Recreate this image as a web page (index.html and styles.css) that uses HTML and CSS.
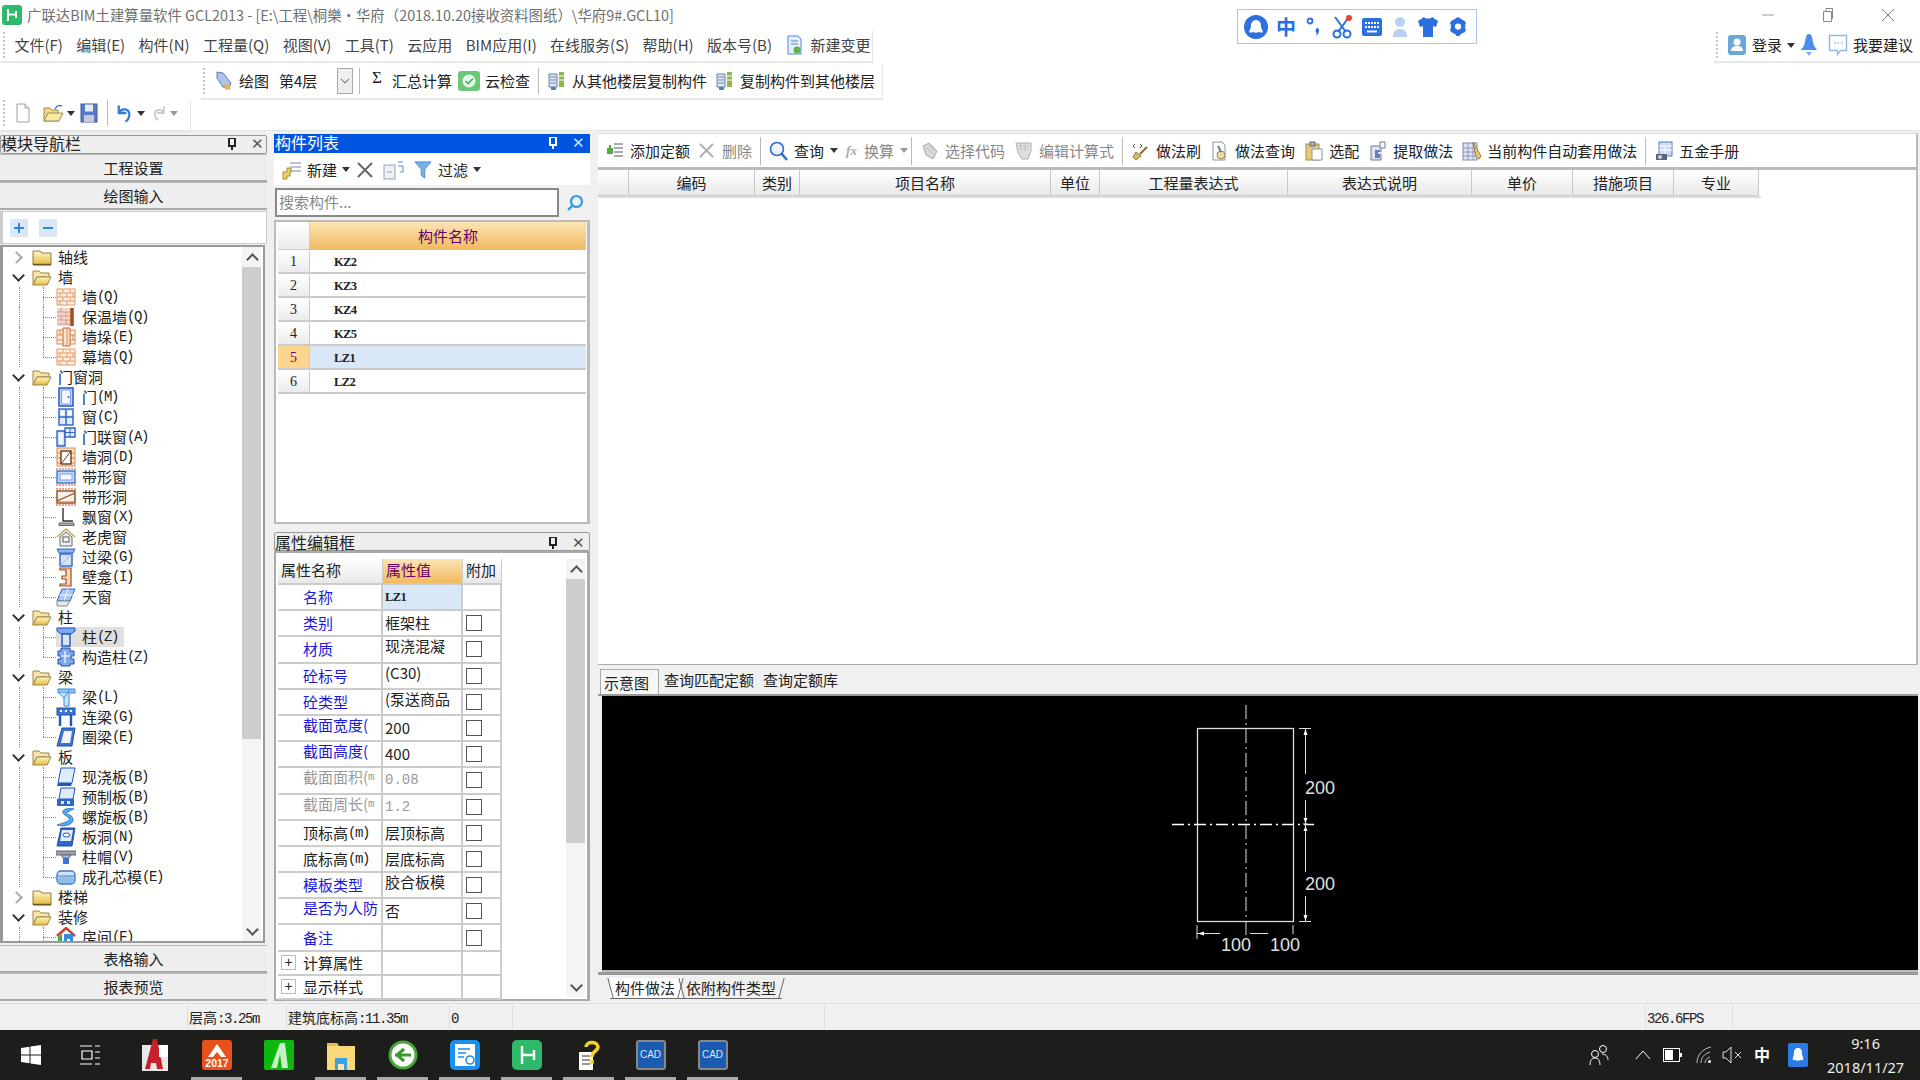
FILE: index.html
```html
<!DOCTYPE html>
<html lang="zh-CN">
<head>
<meta charset="utf-8">
<title>广联达BIM土建算量软件 GCL2013</title>
<link rel="stylesheet" href="styles.css">
</head>
<body>
<svg class="defs" width="0" height="0" aria-hidden="true">
<defs>
<linearGradient id="gy" x1="0" y1="0" x2="0" y2="1"><stop offset="0" stop-color="#fff6c8"/><stop offset="1" stop-color="#e8b93c"/></linearGradient>
<linearGradient id="gb" x1="0" y1="0" x2="0" y2="1"><stop offset="0" stop-color="#d8e6fb"/><stop offset="1" stop-color="#6f9ee8"/></linearGradient>
<symbol id="f" viewBox="0 0 20 20"><path d="M1 4h7l2 2h9v12H1z" fill="url(#gy)" stroke="#8a7a4a"/><path d="M1 17.5h18" stroke="#6a5a2a" stroke-width="1.5"/></symbol>
<symbol id="o" viewBox="0 0 20 20"><path d="M1 4h6l2 2h8v4H5L1 18z" fill="#f7e6a8" stroke="#9a8850"/><path d="M5 10h14l-4 8H1z" fill="url(#gy)" stroke="#9a8850"/></symbol>
<symbol id="wall" viewBox="0 0 20 20"><rect x="1" y="2" width="18" height="16" fill="#fdeee0" stroke="#e39a66"/><path d="M1 6h18M1 10h18M1 14h18M7 2v4M14 2v4M4 6v4M11 6v4M17 6v4M7 10v4M14 10v4M4 14v4M11 14v4" stroke="#e39a66" fill="none"/></symbol>
<symbol id="insul" viewBox="0 0 20 20"><rect x="1" y="1" width="13" height="18" fill="#f3d4cd"/><path d="M1 5h13M1 9h13M1 13h13M1 17h13M5 1v4M10 5v4M5 9v4M10 13v4" stroke="#d59a90"/><rect x="14" y="1" width="4" height="18" fill="#c0693a"/><path d="M16 1v18" stroke="#7a3a18"/></symbol>
<symbol id="pier" viewBox="0 0 20 20"><rect x="1" y="3" width="18" height="14" fill="#fdeee0" stroke="#d98a50"/><path d="M7 1h7v18H7z" fill="#fbe3cf" stroke="#c8642c"/><path d="M11 1v18M1 8h6M14 8h5M1 13h6M14 13h5M4 3v5M17 8v5" stroke="#d98a50"/></symbol>
<symbol id="door" viewBox="0 0 20 20"><rect x="3" y="1" width="14" height="18" fill="#c8dbf8" stroke="#2e62c8" stroke-width="1.6"/><rect x="5.5" y="3" width="9" height="14" fill="#f2f6fe" stroke="#7da0e0"/><circle cx="12.5" cy="10" r="1" fill="#2e62c8"/></symbol>
<symbol id="win" viewBox="0 0 20 20"><rect x="3" y="2" width="14" height="16" fill="#dfeafc" stroke="#2e62c8" stroke-width="1.4"/><path d="M10 2v16M3 10h14" stroke="#2e62c8" stroke-width="1.4"/><path d="M5 4h3v4H5zM12 4h3v4h-3z" fill="#fff"/></symbol>
<symbol id="dwin" viewBox="0 0 20 20"><path d="M1 4h8v15H1z" fill="#cfe0fa" stroke="#2e62c8" stroke-width="1.4"/><path d="M3 6h4v11H3z" fill="#f2f6fe"/><path d="M9 1h10v9H9z" fill="#e6effd" stroke="#2e62c8" stroke-width="1.4"/><path d="M14 1v9M9 5.500h10" stroke="#2e62c8"/></symbol>
<symbol id="hole" viewBox="0 0 20 20"><rect x="1" y="1" width="18" height="18" fill="#fbe3cf" stroke="#d98a50"/><path d="M1 6h4M15 6h4M1 11h4M15 11h4M1 16h4M15 16h4" stroke="#d98a50"/><rect x="5" y="4" width="10" height="13" fill="#fff" stroke="#6a3a1a" stroke-width="1.4"/><path d="M5 17 15 4" stroke="#6a3a1a"/></symbol>
<symbol id="band" viewBox="0 0 20 20"><path d="M0 2h20M0 18h20" stroke="#e8a898" stroke-width="2" stroke-dasharray="2 1"/><rect x="1" y="4" width="18" height="12" fill="#c4d8f8" stroke="#3d72d0" stroke-width="1.4"/><rect x="4" y="7" width="12" height="6" fill="#f6f9ff" stroke="#7da0e0"/></symbol>
<symbol id="bandh" viewBox="0 0 20 20"><path d="M0 2h20M0 18h20" stroke="#e8a898" stroke-width="2" stroke-dasharray="2 1"/><rect x="1" y="4" width="18" height="12" fill="#fbeee2" stroke="#8a4a20" stroke-width="1.4"/><path d="M1 14 19 6" stroke="#8a4a20" stroke-width="1.2"/><path d="M1 15h18" stroke="#c87a40"/></symbol>
<symbol id="bay" viewBox="0 0 20 20"><path d="M7 1v13h10" fill="none" stroke="#333" stroke-width="1.4"/><path d="M3 16h15v2.500H3z" fill="#aab0b8" stroke="#667"/></symbol>
<symbol id="dorm" viewBox="0 0 20 20"><path d="M1 10 10 2l9 8" fill="none" stroke="#c9a94e" stroke-width="1.6"/><path d="M4 10v9h12v-9l-6-5z" fill="#eef1f4" stroke="#667"/><rect x="7" y="10" width="6" height="5" fill="#fff" stroke="#555"/></symbol>
<symbol id="lint" viewBox="0 0 20 20"><path d="M1 2h18l-2 4H3z" fill="#8fb4ef" stroke="#2e62c8"/><rect x="4" y="7" width="12" height="12" fill="#d6e4fa" stroke="#2e62c8" stroke-width="1.4"/><path d="M4 19 16 7" stroke="#8fb4ef"/></symbol>
<symbol id="niche" viewBox="0 0 20 20"><path d="M4 1h11v18H4v-2h6v-5H6V9h4V3H4z" fill="#fbd6ba" stroke="#a04a18" stroke-width="1.2"/></symbol>
<symbol id="sky" viewBox="0 0 20 20"><path d="M6 2h13l-5 12H1z" fill="#a9c6f4" stroke="#2e62c8"/><path d="M12 2 8 14M3.500 8H17" stroke="#fff"/><path d="M1 14h13l-3 5H1z" fill="#e6e6e6" stroke="#888"/></symbol>
<symbol id="col" viewBox="0 0 20 20"><path d="M1 1h18v3l-4 3H5L1 4z" fill="#7fa8ec" stroke="#1f56c0"/><rect x="6" y="7" width="8" height="12" fill="#d6e4fa" stroke="#1f56c0" stroke-width="1.4"/></symbol>
<symbol id="gzz" viewBox="0 0 20 20"><path d="M5 1h9v3h4v5h-3v3h3v5h-4v2H5v-2H2v-5h3V9H2V4h3z" fill="#7fa8ec" stroke="#1f4fa8"/><path d="M9 4v12M5 9h9" stroke="#e6effd" stroke-width="1.5"/></symbol>
<symbol id="beam" viewBox="0 0 20 20"><path d="M2 2h17v4H2z" fill="#8fc4f4" stroke="#3a8ad8"/><path d="M3 6l5 5v8h5V6" fill="#cfe4fa" stroke="#3a8ad8"/><path d="M8 11l6-9" stroke="#3a8ad8"/></symbol>
<symbol id="lb" viewBox="0 0 20 20"><rect x="1" y="1" width="18" height="7" fill="#3f74d4" stroke="#1f4fa8"/><path d="M4 3h2v2H4zM9 3h2v2H9zM14 3h2v2h-2z" fill="#fff"/><path d="M4 8v11M15 8v11" stroke="#1f56c0" stroke-width="2.400"/></symbol>
<symbol id="ring" viewBox="0 0 20 20"><path d="M6 1h13l-3 18H1z" fill="#3f74d4" stroke="#1f4fa8"/><path d="M8 4h8l-2 12H5z" fill="#f2f6fe"/></symbol>
<symbol id="slab" viewBox="0 0 20 20"><path d="M5 1h14l-3 15H2z" fill="#e0ebfc" stroke="#1f56c0"/><path d="M2 16h14l-1 3H1z" fill="#1f56c0"/></symbol>
<symbol id="preslab" viewBox="0 0 20 20"><path d="M5 1h14l-2 11H3z" fill="#e0ebfc" stroke="#1f56c0"/><rect x="1" y="12" width="17" height="7" fill="#2f66c8"/><path d="M5 14h3v3H5zM11 14h3v3h-3z" fill="#e0ebfc"/></symbol>
<symbol id="spiral" viewBox="0 0 20 20"><path d="M18 2C8 0 4 5 9 8s6 5 1 7-7 2-9 3c6 2 17 0 16-6S7 8 12 5s4-2 6-3z" fill="#5aa8ec" stroke="#2e7ed0"/></symbol>
<symbol id="slabh" viewBox="0 0 20 20"><path d="M5 1h14l-3 18H1z" fill="#2f66c8" stroke="#1f4fa8"/><path d="M6 3h11l-2 11H4z" fill="#e0ebfc"/><ellipse cx="10.500" cy="8" rx="3.500" ry="2" fill="#fff" stroke="#1f56c0"/></symbol>
<symbol id="cap" viewBox="0 0 20 20"><rect x="0" y="4" width="20" height="4" fill="#98a0aa" stroke="#667"/><path d="M5 8h10l-2 3H7z" fill="#b4bac2" stroke="#667"/><rect x="7" y="11" width="6" height="6" fill="#3f74d4"/></symbol>
<symbol id="core" viewBox="0 0 20 20"><rect x="1" y="4" width="18" height="13" rx="4" fill="#cfe4fa" stroke="#3a7ac8" stroke-width="1.4"/><path d="M1 9h18" stroke="#3a7ac8"/><rect x="2" y="10" width="16" height="6" rx="3" fill="#8fbcea"/></symbol>
<symbol id="room" viewBox="0 0 20 20"><path d="M1 9 10 1l9 8" fill="none" stroke="#d83a2a" stroke-width="2.400"/><path d="M2 10l4-3v12H2z" fill="#3ab04a"/><path d="M8 7h9v12H8z" fill="#3a8ad8"/><rect x="11" y="12" width="3" height="7" fill="#fff"/></symbol>
<symbol id="page" viewBox="0 0 20 20"><path d="M4 1h8l4 4v14H4z" fill="#fff" stroke="#9aa2ae"/><path d="M12 1v4h4" fill="#e8ecf2" stroke="#9aa2ae"/></symbol>
<symbol id="plusdoc" viewBox="0 0 20 20"><path d="M3 1h10l3 3v15H3z" fill="#e8f0fb" stroke="#4a8ad8"/><path d="M6 6h7M6 9h7" stroke="#4a8ad8"/><circle cx="12" cy="15" r="3.500" fill="#5fb04a"/></symbol>
<symbol id="copyfl" viewBox="0 0 20 20"><path d="M2 3h8v13H2z" fill="#dfe6f2" stroke="#6a7a98"/><path d="M3 6h6M3 9h6M3 12h6" stroke="#6a8ac8"/><path d="M12 1h5v15h-5z" fill="#8ab84a"/><path d="M12 5h5M12 9h5" stroke="#fff"/><path d="M4 16h5v3H4z" fill="#3a8ac8"/></symbol>
<symbol id="pen" viewBox="0 0 20 20"><path d="M3 1l6 1 8 10-2 6-6-2L3 7z" fill="#aac4ee" stroke="#5a7ab8"/><path d="M9 14l3 5 5-1-2-6z" fill="#d8b870"/></symbol>
<symbol id="addq" viewBox="0 0 20 20"><path d="M9 3h9M9 7h9M9 11h9M9 15h9" stroke="#556" /><path d="M2 7h6v6H2z" fill="#5aa84a"/><path d="M5 4v4" stroke="#5aa84a" stroke-width="2"/></symbol>
<symbol id="sel" viewBox="0 0 20 20"><path d="M3 5 9 2l8 8-4 8-7-4z" fill="#d8d8d8" stroke="#aaa"/><path d="M6 6l6 6M9 4l6 6" stroke="#bbb"/></symbol>
<symbol id="calc" viewBox="0 0 20 20"><path d="M2 2h15v8l-3 8H8l-4-6z" fill="#e0e0e0" stroke="#b0b0b0"/><path d="M4 5h11M4 8h11M7 2v8M11 2v8" stroke="#c4c4c4"/></symbol>
<symbol id="brush" viewBox="0 0 20 20"><path d="M16 6 9 13" stroke="#8a6a3a" stroke-width="2"/><path d="M5 11l5 4-5 4-3-3z" fill="#d8c060" stroke="#8a7a3a"/><path d="M4 3 2 5l2 2M9 3l2 2-2 2" fill="none" stroke="#555"/></symbol>
<symbol id="qry" viewBox="0 0 20 20"><path d="M3 1h9l3 3v15H3z" fill="#fff" stroke="#8a96aa"/><circle cx="11" cy="14" r="4" fill="#e8d8a8" stroke="#a08a50"/><path d="M8 5l3 6" stroke="#6a7a98" stroke-width="2"/></symbol>
<symbol id="clip" viewBox="0 0 20 20"><rect x="2" y="3" width="13" height="16" fill="#e8c878" stroke="#a08a50"/><rect x="6" y="1" width="5" height="4" fill="#aab2be" stroke="#667"/><path d="M8 8h10v11H8z" fill="#fff" stroke="#8a96aa"/></symbol>
<symbol id="ext" viewBox="0 0 20 20"><path d="M3 5h10v14H3z" fill="#dfe6f2" stroke="#6a7a98"/><path d="M7 9h5v8H7z" fill="#6a7ac8"/><path d="M12 1h5v6h-5z" fill="#fff" stroke="#6a7a98"/><path d="M10 12h5" stroke="#fff" stroke-width="1.6"/></symbol>
<symbol id="auto" viewBox="0 0 20 20"><rect x="1" y="2" width="14" height="17" fill="#dfe6f2" stroke="#7a8ab0"/><path d="M1 7h14M1 11h14M1 15h14M6 2v17M11 2v17" stroke="#8a9ac0"/><path d="M11 1l8 14-2 3-3-2z" fill="#e8c878" stroke="#a07a30"/></symbol>
<symbol id="hw" viewBox="0 0 20 20"><rect x="5" y="1" width="13" height="14" fill="#cddcf4" stroke="#5a7ab8"/><path d="M5 5h13M5 9h13M11 5v10" stroke="#fff"/><path d="M2 13h11v6H2z" fill="#5a6478"/><circle cx="6" cy="16" r="2" fill="#d0d4da"/></symbol>
</defs>
</svg>

<div class="topbar">
  <header class="titlebar">
    <svg class="logo" viewBox="0 0 20 20"><rect width="20" height="20" rx="3" fill="#2fb96a"/><path d="M6 4v12M6 9.500h9M14 6v7" stroke="#fff" stroke-width="2" fill="none"/></svg>
    <span class="title">广联达BIM土建算量软件 GCL2013 - [E:\工程\桐樂·华府（2018.10.20接收资料图纸）\华府9#.GCL10]</span>
    <div class="winctl">
      <svg viewBox="0 0 14 14"><path d="M1 7h12" stroke="#999"/></svg>
      <svg viewBox="0 0 14 14"><path d="M2.500 3.500h8v10h-8zM5 3.500V.5h6.500v10h-1" fill="none" stroke="#888"/></svg>
      <svg viewBox="0 0 14 14"><path d="M1 1l12 12M13 1 1 13" stroke="#777" fill="none"/></svg>
    </div>
  </header>

  <div class="ime">
    <svg class="ime-a" viewBox="0 0 24 24"><circle cx="12" cy="12" r="12" fill="#2b6fe0"/><path d="M12 5c3 0 5 2.500 5 5.500 0 3 1.500 5 2 6.500-1.500 1-3 .5-4 0-2 1-4 1-6 0-1 .5-2.500 1-4 0 .5-1.500 2-3.500 2-6.500C7 7.500 9 5 12 5z" fill="#fff"/></svg>
    <span class="ime-zh">中</span>
    <svg class="ime-p" viewBox="0 0 16 20"><circle cx="4" cy="4" r="2.500" fill="none" stroke="#2b6fe0" stroke-width="1.800"/><path d="M12 11c2 2 1 6-2 8 1-2 1-3 0-4a2.500 2.500 0 0 1 2-4z" fill="#2b6fe0"/></svg>
    <svg class="ime-s" viewBox="0 0 20 24"><path d="M3 2l11 15M17 2 6 17" stroke="#2b6fe0" stroke-width="2"/><circle cx="5" cy="19" r="3.500" fill="none" stroke="#2b6fe0" stroke-width="2"/><circle cx="15" cy="19" r="3.500" fill="none" stroke="#2b6fe0" stroke-width="2"/><circle cx="17" cy="3" r="3" fill="#f04030"/></svg>
    <svg class="ime-k" viewBox="0 0 20 18"><rect width="20" height="18" rx="2" fill="#2b6fe0"/><path d="M3 5h14M3 9h14" stroke="#fff" stroke-width="2" stroke-dasharray="2 1"/><path d="M5 13.500h10" stroke="#fff" stroke-width="2"/></svg>
    <svg class="ime-u" viewBox="0 0 16 22"><circle cx="8" cy="6" r="5" fill="#b8d0f4"/><path d="M1 21c0-6 3-8 7-8s7 2 7 8z" fill="#b8d0f4"/></svg>
    <svg class="ime-t" viewBox="0 0 20 22"><path d="M6 1 0 5l2 6 3-1v11h10V10l3 1 2-6-6-4c-1 2-7 2-8 0z" fill="#2b6fe0"/></svg>
    <svg class="ime-g" viewBox="0 0 20 22"><path d="M10 0l8 5v11l-8 5-8-5V5z" fill="#2b6fe0"/><path d="M10 1v20M2 5.500l16 10M18 5.500 2 15.500" stroke="#2b6fe0" stroke-width="4"/><circle cx="10" cy="10.500" r="3.500" fill="#fff"/></svg>
  </div>

  <div class="menurow">
    <nav class="strip menu">
      <span class="grip"></span>
      <span>文件(F)</span><span>编辑(E)</span><span>构件(N)</span><span>工程量(Q)</span><span>视图(V)</span><span>工具(T)</span><span>云应用</span><span>BIM应用(I)</span><span>在线服务(S)</span><span>帮助(H)</span><span>版本号(B)</span>
      <span class="ti"><svg class="ic"><use href="#plusdoc"/></svg>新建变更</span>
    </nav>
    <div class="strip login">
      <span class="grip"></span>
      <svg class="ic" viewBox="0 0 20 20"><rect x="1" width="18" height="20" rx="3" fill="#6aa8d8"/><circle cx="10" cy="7" r="3.500" fill="#fff"/><path d="M4 16c0-4 3-5 6-5s6 1 6 5z" fill="#fff"/></svg>
      <span>登录</span><span class="caret"></span>
      <svg class="bell" viewBox="0 0 16 22"><path d="M8 0c3 0 3 3 4 8s3 6 4 8H0c1-2 3-3 4-8s1-8 4-8z" fill="#4a90e8"/><path d="M5 18h6l-3 4z" fill="#7ab0ec"/></svg>
      <svg class="msg" viewBox="0 0 20 22"><path d="M1.500 1.500h17v15h-6l-3 4v-4h-8z" fill="#fff" stroke="#8ab8ec" stroke-width="1.400"/><path d="M6 9h1.500M9.500 9H11M13 9h1.500" stroke="#5a8ac8"/></svg>
      <span>我要建议</span>
    </div>
  </div>

  <div class="strip tb2">
    <span class="grip"></span>
    <svg class="ic"><use href="#pen"/></svg><span class="lb">绘图</span>
    <span class="combo"><span class="combo-t">第4层</span><span class="combo-b"><svg viewBox="0 0 10 6"><path d="M1 1l4 4 4-4" fill="none" stroke="#555"/></svg></span></span>
    <span class="vsep"></span>
    <span class="sigma">Σ</span><span class="lb sum">汇总计算</span>
    <svg class="ic chk" viewBox="0 0 22 20"><rect width="22" height="20" rx="3" fill="#6cc878"/><circle cx="11" cy="10" r="6.500" fill="#e6f8e8"/><path d="M7.500 10l2.500 2.500 5-5" fill="none" stroke="#4ab060" stroke-width="1.600"/></svg><span class="lb">云检查</span>
    <span class="vsep wide"></span>
    <svg class="ic"><use href="#copyfl"/></svg><span class="lb">从其他楼层复制构件</span>
    <svg class="ic cf2"><use href="#copyfl"/></svg><span class="lb">复制构件到其他楼层</span>
  </div>

  <div class="strip tb3">
    <span class="grip"></span>
    <svg class="ic16"><use href="#page"/></svg>
    <svg class="ic open" viewBox="0 0 22 20"><path d="M2 5h6l2 2h6v11H2z" fill="#f0d88a" stroke="#a08a50"/><path d="M6 10h15l-4 8H2z" fill="#f8e8a8" stroke="#a08a50"/><path d="M13 6c2-4 5-4 7-3" fill="none" stroke="#3a7ad8" stroke-width="1.500"/></svg>
    <span class="caret"></span>
    <svg class="ic save" viewBox="0 0 18 20"><rect x="1" y="1" width="16" height="18" fill="#5a7ac8" stroke="#3a5aa0"/><rect x="5" y="1.500" width="8" height="7" fill="#e8eef8"/><rect x="4" y="12" width="10" height="7" fill="#c8c8d8"/></svg>
    <span class="vsep"></span>
    <svg class="ic undo" viewBox="0 0 20 20"><path d="M4 2v8h8" fill="none" stroke="#3a7ad8" stroke-width="2.400"/><path d="M4 10c3-6 12-5 11 3-.5 3-2 5-4 6" fill="none" stroke="#3a7ad8" stroke-width="2.400"/></svg>
    <span class="caret"></span>
    <svg class="ic redo" viewBox="0 0 20 20"><path d="M16 2v8H8" fill="none" stroke="#c4ccd4" stroke-width="2.400"/><path d="M16 10C13 4 4 5 5 13c.5 3 2 5 4 6" fill="none" stroke="#c4ccd4" stroke-width="2.400"/></svg>
    <span class="caret dim"></span>
  </div>
</div>

<main class="main">
  <section class="col-left">
    <div class="ptitle"><span>模块导航栏</span><span class="pctl"><b class="pin"></b><b class="cls">✕</b></span></div>
    <button class="navbtn">工程设置</button>
    <button class="navbtn">绘图输入</button>
    <div class="pm">
      <svg viewBox="0 0 18 18"><rect width="18" height="18" fill="#dbe6f6"/><path d="M9 4v10M4 9h10" stroke="#2a8ae0" stroke-width="2"/></svg>
      <svg viewBox="0 0 18 18"><rect width="18" height="18" fill="#dbe6f6"/><path d="M4 9h10" stroke="#2a8ae0" stroke-width="2"/></svg>
    </div>
    <div class="treebox">
      <div class="tree">
        <div class="g"><i class="chev c"></i><svg class="fi"><use href="#f"/></svg>轴线</div>
        <div class="g"><i class="chev"></i><svg class="fi"><use href="#o"/></svg>墙</div>
        <div class="l"><i class="dots"></i><svg class="ti20"><use href="#wall"/></svg>墙<em>(Q)</em></div>
        <div class="l"><i class="dots"></i><svg class="ti20"><use href="#insul"/></svg>保温墙<em>(Q)</em></div>
        <div class="l"><i class="dots"></i><svg class="ti20"><use href="#pier"/></svg>墙垛<em>(E)</em></div>
        <div class="l e"><i class="dots"></i><svg class="ti20"><use href="#wall"/></svg>幕墙<em>(Q)</em></div>
        <div class="g"><i class="chev"></i><svg class="fi"><use href="#o"/></svg>门窗洞</div>
        <div class="l"><i class="dots"></i><svg class="ti20"><use href="#door"/></svg>门<em>(M)</em></div>
        <div class="l"><i class="dots"></i><svg class="ti20"><use href="#win"/></svg>窗<em>(C)</em></div>
        <div class="l"><i class="dots"></i><svg class="ti20"><use href="#dwin"/></svg>门联窗<em>(A)</em></div>
        <div class="l"><i class="dots"></i><svg class="ti20"><use href="#hole"/></svg>墙洞<em>(D)</em></div>
        <div class="l"><i class="dots"></i><svg class="ti20"><use href="#band"/></svg>带形窗</div>
        <div class="l"><i class="dots"></i><svg class="ti20"><use href="#bandh"/></svg>带形洞</div>
        <div class="l"><i class="dots"></i><svg class="ti20"><use href="#bay"/></svg>飘窗<em>(X)</em></div>
        <div class="l"><i class="dots"></i><svg class="ti20"><use href="#dorm"/></svg>老虎窗</div>
        <div class="l"><i class="dots"></i><svg class="ti20"><use href="#lint"/></svg>过梁<em>(G)</em></div>
        <div class="l"><i class="dots"></i><svg class="ti20"><use href="#niche"/></svg>壁龛<em>(I)</em></div>
        <div class="l e"><i class="dots"></i><svg class="ti20"><use href="#sky"/></svg>天窗</div>
        <div class="g"><i class="chev"></i><svg class="fi"><use href="#o"/></svg>柱</div>
        <div class="l sel"><i class="dots"></i><span class="seltxt"><svg class="ti20"><use href="#col"/></svg>柱<em>(Z)</em></span></div>
        <div class="l e"><i class="dots"></i><svg class="ti20"><use href="#gzz"/></svg>构造柱<em>(Z)</em></div>
        <div class="g"><i class="chev"></i><svg class="fi"><use href="#o"/></svg>梁</div>
        <div class="l"><i class="dots"></i><svg class="ti20"><use href="#beam"/></svg>梁<em>(L)</em></div>
        <div class="l"><i class="dots"></i><svg class="ti20"><use href="#lb"/></svg>连梁<em>(G)</em></div>
        <div class="l e"><i class="dots"></i><svg class="ti20"><use href="#ring"/></svg>圈梁<em>(E)</em></div>
        <div class="g"><i class="chev"></i><svg class="fi"><use href="#o"/></svg>板</div>
        <div class="l"><i class="dots"></i><svg class="ti20"><use href="#slab"/></svg>现浇板<em>(B)</em></div>
        <div class="l"><i class="dots"></i><svg class="ti20"><use href="#preslab"/></svg>预制板<em>(B)</em></div>
        <div class="l"><i class="dots"></i><svg class="ti20"><use href="#spiral"/></svg>螺旋板<em>(B)</em></div>
        <div class="l"><i class="dots"></i><svg class="ti20"><use href="#slabh"/></svg>板洞<em>(N)</em></div>
        <div class="l"><i class="dots"></i><svg class="ti20"><use href="#cap"/></svg>柱帽<em>(V)</em></div>
        <div class="l e"><i class="dots"></i><svg class="ti20"><use href="#core"/></svg>成孔芯模<em>(E)</em></div>
        <div class="g"><i class="chev c"></i><svg class="fi"><use href="#f"/></svg>楼梯</div>
        <div class="g"><i class="chev"></i><svg class="fi"><use href="#o"/></svg>装修</div>
        <div class="l"><i class="dots"></i><svg class="ti20"><use href="#room"/></svg>房间<em>(F)</em></div>
      </div>
      <div class="vbar tree-bar"><span class="up-a"></span><span class="thumb"></span><span class="dn-a"></span></div>
    </div>
    <button class="navbtn first">表格输入</button>
    <button class="navbtn">报表预览</button>
  </section>

  <section class="col-mid">
    <div class="ptitle active"><span>构件列表</span><span class="pctl"><b class="pin w"></b><b class="cls">✕</b></span></div>
    <div class="midtools">
      <svg class="ic new" viewBox="0 0 20 20"><path d="M8 3h11M8 7h11M8 11h11" stroke="#7a8aa0"/><path d="M1 12h4V8h4v4h-1v4H5v3H1z" fill="#f0d060" stroke="#a88a30"/></svg><span>新建</span><span class="caret"></span>
      <svg class="x" viewBox="0 0 16 16"><path d="M1 1l14 14M15 1 1 15" stroke="#666" stroke-width="2"/></svg>
      <svg class="ic cp" viewBox="0 0 22 20"><rect x="1" y="5" width="11" height="14" fill="#eef1f6" stroke="#9aa2ae"/><path d="M4 12h5" stroke="#9aa2ae"/><path d="M15 2h5M15 6h5v6h-3" fill="none" stroke="#5a8ac8"/></svg>
      <svg class="ic fn" viewBox="0 0 20 20"><path d="M1 1h18l-7 8v10l-4-3V9z" fill="#7ab0e4" stroke="#4a8ac8"/></svg><span>过滤</span><span class="caret"></span>
    </div>
    <div class="searchrow">
      <span class="search">搜索构件...</span>
      <span class="searchbtn"><svg viewBox="0 0 18 18"><circle cx="10.500" cy="7.500" r="5.500" fill="#e8f4fc" stroke="#3a9ae0" stroke-width="2.200"/><path d="M6.500 11.500 2 16" stroke="#3a9ae0" stroke-width="2.400"/></svg></span>
    </div>
    <div class="listgrid">
      <div class="lhead-n"></div><div class="lhead">构件名称</div>
      <div class="ln">1</div><div class="lv">KZ2</div>
      <div class="ln">2</div><div class="lv">KZ3</div>
      <div class="ln">3</div><div class="lv">KZ4</div>
      <div class="ln">4</div><div class="lv">KZ5</div>
      <div class="ln on">5</div><div class="lv on">LZ1</div>
      <div class="ln">6</div><div class="lv">LZ2</div>
    </div>
    <div class="ptitle prop"><span>属性编辑框</span><span class="pctl"><b class="pin"></b><b class="cls">✕</b></span></div>
    <div class="propbox">
      <div class="pgrid">
        <div class="ph">属性名称</div><div class="ph val">属性值</div><div class="ph">附加</div>
        <div class="pn bl">名称</div><div class="pv sel-v mono">LZ1</div><div class="pc"></div>
        <div class="pn bl">类别</div><div class="pv">框架柱</div><div class="pc"><i class="cb"></i></div>
        <div class="pn bl">材质</div><div class="pv up">现浇混凝</div><div class="pc"><i class="cb"></i></div>
        <div class="pn bl">砼标号</div><div class="pv up">(C30)</div><div class="pc"><i class="cb"></i></div>
        <div class="pn bl">砼类型</div><div class="pv up">(泵送商品</div><div class="pc"><i class="cb"></i></div>
        <div class="pn bl up">截面宽度(</div><div class="pv">200</div><div class="pc"><i class="cb"></i></div>
        <div class="pn bl up">截面高度(</div><div class="pv">400</div><div class="pc"><i class="cb"></i></div>
        <div class="pn gr up">截面面积(<small>m</small></div><div class="pv gr mono">0.08</div><div class="pc"><i class="cb"></i></div>
        <div class="pn gr up">截面周长(<small>m</small></div><div class="pv gr mono">1.2</div><div class="pc"><i class="cb"></i></div>
        <div class="pn">顶标高<em>(m)</em></div><div class="pv">层顶标高</div><div class="pc"><i class="cb"></i></div>
        <div class="pn">底标高<em>(m)</em></div><div class="pv">层底标高</div><div class="pc"><i class="cb"></i></div>
        <div class="pn bl">模板类型</div><div class="pv up">胶合板模</div><div class="pc"><i class="cb"></i></div>
        <div class="pn bl up">是否为人防</div><div class="pv">否</div><div class="pc"><i class="cb"></i></div>
        <div class="pn bl">备注</div><div class="pv"></div><div class="pc"><i class="cb"></i></div>
        <div class="pn exp"><i class="plus">+</i>计算属性</div><div class="pv"></div><div class="pc"></div>
        <div class="pn exp"><i class="plus">+</i>显示样式</div><div class="pv"></div><div class="pc"></div>
      </div>
      <div class="vbar prop-bar"><span class="up-a"></span><span class="thumb"></span><span class="dn-a"></span></div>
    </div>
  </section>

  <section class="col-right">
    <div class="rtools">
      <span class="ti"><svg class="ic"><use href="#addq"/></svg>添加定额</span>
      <span class="ti dis"><svg class="x" viewBox="0 0 16 16"><path d="M1 1l14 14M15 1 1 15" stroke="#aaa" stroke-width="2"/></svg>删除</span>
      <span class="vsep"></span>
      <span class="ti"><svg class="ic" viewBox="0 0 20 20"><circle cx="8" cy="8" r="6.500" fill="#eef4fc" stroke="#2a6ad0" stroke-width="1.600"/><path d="M12.500 12.500 18 19" stroke="#2a6ad0" stroke-width="2.400"/></svg>查询<span class="caret"></span></span>
      <span class="ti dis"><span class="fx">fx</span>换算<span class="caret dim"></span></span>
      <span class="vsep a"></span>
      <span class="ti dis"><svg class="ic"><use href="#sel"/></svg>选择代码</span>
      <span class="ti dis"><svg class="ic"><use href="#calc"/></svg>编辑计算式</span>
      <span class="vsep"></span>
      <span class="ti"><svg class="ic"><use href="#brush"/></svg>做法刷</span>
      <span class="ti"><svg class="ic"><use href="#qry"/></svg>做法查询</span>
      <span class="ti"><svg class="ic"><use href="#clip"/></svg>选配</span>
      <span class="ti"><svg class="ic"><use href="#ext"/></svg>提取做法</span>
      <span class="ti"><svg class="ic"><use href="#auto"/></svg>当前构件自动套用做法</span>
      <span class="vsep"></span>
      <span class="ti"><svg class="ic"><use href="#hw"/></svg>五金手册</span>
    </div>
    <div class="qtable">
      <div class="qhead">
        <span class="q0"></span><span class="q1">编码</span><span class="q2">类别</span><span class="q3">项目名称</span><span class="q4">单位</span><span class="q5">工程量表达式</span><span class="q6">表达式说明</span><span class="q7">单价</span><span class="q8">措施项目</span><span class="q9">专业</span>
      </div>
    </div>
    <div class="dtabs"><span class="dtab on">示意图</span><span class="dtab">查询匹配定额</span><span class="dtab">查询定额库</span></div>
    <div class="canvas">
      <svg class="draw">
        <g fill="none" stroke="#ddd">
          <rect x="595.500" y="32.500" width="96" height="193" stroke-width="1.300"/>
          <path d="M644 9v230" stroke-dasharray="14 4 2 4"/>
          <path d="M570 128.500h142" stroke="#fff" stroke-dasharray="12 4 2 4" stroke-width="1.300"/>
          <path d="M697 32.500h12M697 225.500h12M703.500 32v46M703.500 104v72M703.500 200v26M701 128h5"/>
          <path d="M595 229v14M691 229v9M595 237.500h23M648 237.500h18"/>
        </g>
        <g fill="#fff"><path d="M703.500 33l2 6h-4zM703.500 225l2-6h-4zM703.500 127l2-5h-4zM703.500 130l2 5h-4zM596 237.500l6-2v4z"/></g>
        <text x="703" y="98" class="dim">200</text>
        <text x="703" y="194" class="dim">200</text>
        <text x="619" y="255" class="dim">100</text>
        <text x="668" y="255" class="dim">100</text>
      </svg>
    </div>
    <div class="btabs"><span class="btab on">构件做法</span><span class="btab">依附构件类型</span></div>
  </section>
</main>

<footer class="status">
  <span class="s0"></span><span class="s1">层高<em>:3.25m</em></span><span class="s2">建筑底标高<em>:11.35m</em></span><span class="s3"><em>0</em></span><span class="s4"></span><span class="s5"></span><span class="s6"><em>326.6FPS</em></span><span class="s7"></span>
</footer>

<div class="taskbar">
  <div class="slots">
    <span class="slot"><svg class="tw" viewBox="0 0 20 20"><path d="M0 3l8.500-1.200V9.500H0zM9.500 1.600 20 0v9.500H9.500zM0 10.500h8.500v7.700L0 17zM9.500 10.500H20V20L9.500 18.400z" fill="#fff"/></svg></span>
    <span class="slot"><svg class="tw tv" viewBox="0 0 20 20"><path d="M0 1h12M0 19h12M2 6h10v8H2zM15 1h5M15 7h5M15 13h5M15 19h5" fill="none" stroke="#fff" stroke-width="1.200"/></svg></span>
    <span class="slot"><svg class="app1" viewBox="0 0 26 32"><path d="M0 6h26v26H0z" fill="#e8e8e8"/><path d="M3 30 11 0h4l6 30h-6l-1-6H9l-1 6z" fill="#c8202a"/><rect x="17" y="6" width="9" height="12" fill="#fff"/></svg></span>
    <span class="slot run"><svg class="app" viewBox="0 0 30 30"><rect width="30" height="30" rx="3" fill="#e8501c"/><path d="M6 17 15 4l9 13h-5l-4-5-4 5z" fill="#fff"/><text x="15" y="27" class="y17">2017</text></svg></span>
    <span class="slot"><svg class="app" viewBox="0 0 30 30"><rect width="30" height="30" rx="2" fill="#0cb80c"/><path d="M7 28 16 3h5l3 25h-6l-2-14-3 14z" fill="#c8f0c8"/></svg></span>
    <span class="slot run"><svg class="app" viewBox="0 0 30 30"><path d="M1 3h10l2 3h16v24H1z" fill="#f8d878"/><path d="M1 3h10l2 3H1z" fill="#e8b848"/><rect x="9" y="18" width="12" height="12" fill="#3aa0e8"/><rect x="12" y="24" width="6" height="6" fill="#f8e8a8"/></svg></span>
    <span class="slot run"><svg class="app" viewBox="0 0 30 30"><circle cx="15" cy="15" r="13" fill="#fff" stroke="#4aa83a" stroke-width="3"/><path d="M7 15h16M9 15l7-6M9 15l7 6" stroke="#3a9a2a" stroke-width="3" fill="none"/></svg></span>
    <span class="slot run"><svg class="app" viewBox="0 0 30 30"><rect width="30" height="30" rx="5" fill="#1a90f0"/><rect x="5" y="4" width="20" height="22" fill="#fff"/><path d="M8 9h12M8 13h8M8 17h6" stroke="#1a90f0" stroke-width="1.600"/><circle cx="20" cy="20" r="4" fill="none" stroke="#1a90f0" stroke-width="1.600"/></svg></span>
    <span class="slot run"><svg class="app" viewBox="0 0 30 30"><rect width="30" height="30" rx="5" fill="#2fb96a"/><path d="M10 6v18M10 15h13M22 10v10" stroke="#fff" stroke-width="2.400" fill="none"/></svg></span>
    <span class="slot run"><svg class="app" viewBox="0 0 30 30"><path d="M5 12h14v18H5z" fill="#fff"/><path d="M8 16h8M8 20h8M8 24h8" stroke="#333"/><path d="M12 7c0-6 12-6 12 0 0 4-6 4-6 10M18 20v4" fill="none" stroke="#f8d020" stroke-width="3.600"/></svg></span>
    <span class="slot run"><span class="cad">CAD</span></span>
    <span class="slot run"><span class="cad">CAD</span></span>
  </div>
  <div class="tray">
    <svg class="tp" viewBox="0 0 20 22"><circle cx="6" cy="10" r="3.500" fill="none" stroke="#fff"/><circle cx="14" cy="5" r="3.500" fill="none" stroke="#fff"/><path d="M1 21c0-5 2-7 5-7s5 2 5 7M13 10c3 0 6 2 6 6" fill="none" stroke="#fff"/></svg>
    <svg class="tc" viewBox="0 0 16 10"><path d="M1 9l7-8 7 8" fill="none" stroke="#fff"/></svg>
    <svg class="tb" viewBox="0 0 20 16"><rect x=".5" y="1.500" width="16" height="13" fill="none" stroke="#fff"/><rect x="2" y="3" width="8" height="10" fill="#fff"/><path d="M18 6v4" stroke="#fff" stroke-width="2"/></svg>
    <svg class="tf" viewBox="0 0 16 18"><path d="M1 17C1 9 6 3 15 1M5 17c0-5 3-9 9-11M9 17c0-3 2-5 5-6" fill="none" stroke="#bbb"/><circle cx="13.500" cy="15.500" r="1.500" fill="#fff"/></svg>
    <svg class="ts" viewBox="0 0 20 18"><path d="M1 6h3l5-5v16l-5-5H1z" fill="none" stroke="#ddd"/><path d="M13 6l6 6M19 6l-6 6" stroke="#ddd"/></svg>
    <span class="tz">中</span>
    <svg class="tq" viewBox="0 0 20 24"><rect width="20" height="24" rx="2" fill="#2b7ae8"/><path d="M10 5c3 0 4 2 4 5s2 6 1 7c-1 .5-2 0-2 0-2 1-4 1-6 0 0 0-1 .5-2 0-1-1 1-4 1-7s1-5 4-5z" fill="#fff"/></svg>
    <span class="clock"><span>9:16</span><span>2018/11/27</span></span>
  </div>
</div>
</body>
</html>
```
FILE: styles.css
```css
* { box-sizing: border-box; }
html, body { margin: 0; height: 100%; }
body {
  width: 1920px; height: 1080px; overflow: hidden;
  display: flex; flex-direction: column;
  background: #f0f0f0; color: #222;
  font: 15px/1.2 "Noto Sans CJK SC", "Noto Sans", sans-serif;
}
em { font: normal 14px "Liberation Mono", monospace; letter-spacing: -1.4px; color: inherit; }
.defs { display: block; width: 0; height: 0; flex: none; }

/* top area */
.topbar { height: 130px; flex: none; background: #fff; display: flex; flex-direction: column; position: relative; }
.titlebar { height: 29px; flex: none; display: flex; align-items: center; padding: 0 0 0 2px; }
.logo { width: 20px; height: 20px; flex: none; margin-right: 5px; }
.title { font-size: 14.4px; color: #707070; white-space: nowrap; flex: 1; }
.winctl { display: flex; gap: 46px; padding-right: 25px; align-items: center; }
.winctl svg { width: 14px; height: 14px; }

.ime { position: absolute; left: 1237px; top: 9px; width: 240px; height: 35px; background: #fff; border: 1px solid #aac4ee; display: flex; align-items: center; padding-left: 6px; }
.ime svg, .ime span { flex: none; }
.ime-a { width: 24px; height: 24px; }
.ime-zh { color: #2b6fe0; font-size: 20px; font-weight: 700; margin-left: 8px; line-height: 1; }
.ime-p { width: 16px; height: 20px; margin-left: 10px; }
.ime-s { width: 20px; height: 24px; margin-left: 10px; }
.ime-k { width: 20px; height: 18px; margin-left: 10px; }
.ime-u { width: 16px; height: 22px; margin-left: 10px; }
.ime-t { width: 20px; height: 22px; margin-left: 10px; }
.ime-g { width: 18px; height: 22px; margin-left: 11px; }

.strip { display: flex; align-items: center; background: #fff; box-shadow: 1px 2px 0 #e6e6e6; }
.grip { width: 2px; height: 26px; flex: none; margin: 0 9px 0 3px; background: repeating-linear-gradient(#c4c4c4 0 2px, transparent 2px 4px); }
.menurow { height: 32px; flex: none; display: flex; justify-content: space-between; }
.menu { width: 872px; gap: 13.4px; color: #444; white-space: nowrap; }
.menu .grip { margin-right: -4px; }
.ti { display: inline-flex; align-items: center; gap: 5px; white-space: nowrap; }
.ic { width: 20px; height: 20px; flex: none; }
.ic16 { width: 20px; height: 22px; flex: none; }
.login { width: 207px; height: 32px; color: #222; }
.login .grip { margin-right: 9px; }
.login span:nth-of-type(2) { margin-left: 5px; }
.login .caret { margin: 0 6px 0 5px; }
.bell { width: 16px; height: 22px; flex: none; }
.msg { width: 20px; height: 22px; flex: none; margin: 0 5px 0 11px; }
.caret { display: inline-block; width: 0; height: 0; flex: none; border: 4px solid transparent; border-top: 5px solid #333; border-bottom: 0; }
.caret.dim { border-top-color: #999; }

.tb2 { margin: 2px 0 0 200px; width: 682px; height: 35px; flex: none; }
.tb2 .grip { margin-right: 9px; }
.lb { margin-left: 5px; white-space: nowrap; color: #222; }
.combo { display: flex; align-items: center; width: 78px; height: 28px; margin-left: 6px; background: #fff; }
.combo-t { flex: 1; padding-left: 4px; }
.combo-b { width: 16px; height: 26px; background: #eee; border: 1px solid #aaa; display: flex; align-items: center; justify-content: center; }
.combo-b svg { width: 10px; height: 6px; }
.vsep { width: 1px; height: 26px; background: #bbb; flex: none; margin: 0 6px; }
.vsep.wide { margin: 0 8px; }
.cf2 { margin-left: 8px; }
.sigma { font-size: 17px; margin: 0 0 4px 6px; font-family: "Liberation Serif", serif; }
.lb.sum { margin: 0 6px 0 10px; }
.chk { width: 22px; }
.tb3 { width: 190px; height: 32px; flex: none; padding-bottom: 2px; }
.tb3 .grip { margin-right: 8px; }
.open { width: 22px; margin-left: 9px; }
.tb3 .caret { margin-left: 3px; }
.save { width: 18px; margin-left: 5px; }
.tb3 .vsep { margin: 0 7px 0 9px; }
.undo { width: 19px; }
.redo { width: 16px; margin-left: 6px; }

/* main */
.main { flex: 1; min-height: 0; display: flex; padding-top: 4px; background: #f0f0f0; border-top: 1px solid #e4e4e4; }
.col-left { width: 267px; flex: none; display: flex; flex-direction: column; margin-right: 5px; padding-bottom: 2px; }
.col-mid { width: 321px; flex: none; display: flex; flex-direction: column; margin: -1px 5px 0 0; }
.col-right { flex: 1; min-width: 0; display: flex; flex-direction: column; margin: -2px 2px 0 0; }

.ptitle { height: 19px; flex: none; display: flex; justify-content: space-between; align-items: center; background: #eee; border: 1px solid #999; border-radius: 2px; font-size: 16px; line-height: 1; color: #222; white-space: nowrap; padding-bottom: 3px; }
.ptitle.active { background: #0055e0; border-color: #0055e0; color: #fff; border-radius: 0; width: 316px; margin-left: 2px; }
.ptitle.prop { margin: 8px 0 0 2px; width: 316px; padding-bottom: 0; }
.pctl { display: flex; align-items: center; gap: 15px; padding-right: 4px; }
.col-left .pctl { padding-right: 2px; }
.pin { width: 8px; height: 9px; border: 2px solid #222; border-top-width: 1px; display: block; position: relative; margin: 3px 0 4px; }
.pin::after { content: ""; position: absolute; left: 1px; top: 6px; width: 2px; height: 5px; background: #222; }
.pin.w { border-color: #fff; }
.pin.w::after { background: #fff; }
.cls { font: normal 15px/1 "DejaVu Sans", sans-serif; color: #555; width: 13px; margin-top: 3px; }
.active .cls { color: #cfe0ff; }

.navbtn { height: 28px; flex: none; width: 267px; background: #eee; border: 0; border-bottom: 2px solid #aaa; border-top: 1px solid #bbb; font: 15px "Noto Sans CJK SC", sans-serif; color: #222; padding: 0; }
.navbtn.first { margin-top: 2px; }
.pm { height: 33px; flex: none; background: #fff; display: flex; gap: 11px; align-items: center; padding-left: 7px; margin: 1px 0; border: 1px solid #ccc; border-left-width: 3px; }
.pm svg { width: 18px; height: 18px; }
.treebox { flex: 1; min-height: 0; display: flex; background: #fff; border: 2px solid #999; border-width: 2px 2px 2px 3px; overflow: hidden; margin: 0 2px 0 0; }
.tree { flex: 1; min-width: 0; overflow: hidden; }
.tree .g, .tree .l { height: 20px; display: flex; align-items: center; white-space: nowrap; position: relative; font-size: 15px; line-height: 20px; }
.tree .g { padding-left: 9px; }
.chev { width: 12px; height: 12px; flex: none; margin-right: 8px; position: relative; }
.chev::before { content: ""; position: absolute; left: 2px; top: 0; width: 7px; height: 7px; border: solid #333; border-width: 0 2px 2px 0; transform: rotate(45deg); }
.chev.c::before { border-color: #aaa; transform: rotate(-45deg); left: 0; top: 2px; }
.fi { width: 20px; height: 20px; flex: none; margin-right: 6px; }
.tree .l { padding-left: 40px; }
.tree .l::before, .tree .l::after { content: ""; position: absolute; top: 0; bottom: 0; border-left: 1px dotted #888; }
.tree .l::before { left: 16px; }
.tree .l::after { left: 40px; }
.tree .l.e::after { bottom: 50%; }
.dots { width: 13px; border-top: 1px dotted #888; flex: none; }
.ti20 { width: 20px; height: 20px; flex: none; margin-right: 6px; }
.seltxt { display: flex; align-items: center; background: #e0e0e0; height: 20px; padding-right: 6px; }

.vbar { width: 19px; flex: none; background: #f4f4f4; display: flex; flex-direction: column; align-items: stretch; }
.up-a, .dn-a { height: 20px; flex: none; position: relative; }
.up-a::before, .dn-a::before { content: ""; position: absolute; left: 6px; width: 7px; height: 7px; border: solid #555; transform: rotate(45deg); }
.up-a::before { top: 8px; border-width: 2px 0 0 2px; }
.dn-a::before { top: 4px; border-width: 0 2px 2px 0; }
.thumb { background: #cdcdcd; display: block; }
.tree-bar { margin-right: 2px; }
.tree-bar .thumb { height: 472px; }
.tree-bar .dn-a { margin-top: auto; }
.prop-bar { margin-left: auto; margin-right: 1px; }
.prop-bar .thumb { height: 264px; }
.prop-bar .dn-a { margin-top: auto; }

.midtools { height: 32px; flex: none; display: flex; align-items: center; padding: 1px 0 0 8px; margin-left: 2px; width: 316px; background: #fff; color: #222; }
.new { margin-right: 5px; }
.midtools .caret { margin-left: 5px; }
.midtools .x { width: 16px; height: 16px; margin-left: 7px; }
.cp { width: 22px; margin-left: 10px; }
.fn { width: 18px; margin: 0 6px 0 9px; }
.searchrow { height: 35px; flex: none; display: flex; align-items: center; margin-left: 2px; width: 316px; background: #f0f0f0; }
.search { width: 284px; height: 29px; margin-left: 1px; background: #fff; border: 2px solid #888; color: #888; padding-left: 2px; line-height: 24px; }
.searchbtn { flex: 1; height: 30px; display: flex; align-items: center; justify-content: center; }
.searchbtn svg { width: 18px; height: 18px; }
.listgrid { height: 304px; flex: none; margin-left: 2px; width: 316px; background: #fff; border: 2px solid #bbb; border-right-width: 3px; padding: 0 1px 0 2px; display: grid; grid-template-columns: 32px 1fr; grid-template-rows: 28px; grid-auto-rows: 24px; align-content: start; }
.lhead-n { background: linear-gradient(#fff, #ececec); border-right: 1px solid #ccc; border-bottom: 1px solid #ccc; }
.lhead { background: linear-gradient(#fce4b4, #f0ba60); color: #660066; text-align: center; line-height: 28px; }
.ln { background: linear-gradient(#fff, #ececec); font: 14px "Liberation Serif", serif; text-align: center; line-height: 23px; border-bottom: 2px solid #ccc; border-right: 1px solid #ccc; }
.ln.on { background: #fdd48e; color: #660066; }
.lv { font: 700 12.500px "Liberation Serif", serif; line-height: 25px; padding-left: 24px; border-bottom: 2px solid #ccc; letter-spacing: -.6px; }
.lv.on { background: #d8e8f6; }

.propbox { flex: 1; min-height: 0; margin: 0 0 2px 2px; width: 316px; background: #fff; border: 2px solid #aaa; border-right-width: 3px; display: flex; padding: 6px 1px 2px 2px; }
.pgrid { display: grid; grid-template-columns: 105px 80px 39px; grid-template-rows: 26px repeat(14, 26.2px) 24px 24px; flex: none; }
.ph { background: linear-gradient(#fff, #e8e8e8); border-right: 1px solid #ccc; border-bottom: 2px solid #ccc; padding-left: 3px; line-height: 21px; white-space: nowrap; color: #222; font-size: 15px; }
.ph.val { background: linear-gradient(#fce4b4, #f0ba60); color: #660066; }
.pn, .pv, .pc { border-bottom: 2px solid #ccc; border-right: 2px solid #ccc; display: flex; align-items: center; white-space: nowrap; overflow: hidden; font-size: 15px; }
.pn { padding-left: 25px; }
.pv { padding-left: 2px; }
.pn.up, .pv.up { padding-bottom: 6px; }
.pn small { font: 11px "Liberation Mono", monospace; }
.pn.bl { color: #1818e0; }
.gr { color: #999; }
.mono { font: 700 12.500px "Liberation Serif", serif; letter-spacing: -.6px; }
.pv.gr.mono { font: 400 14px "Liberation Mono", monospace; letter-spacing: 0; }
.sel-v { background: #d8e8f6; }
.pc { justify-content: flex-start; padding-left: 3px; }
.cb { width: 16px; height: 16px; border: 1.500px solid #555; background: #fff; display: block; }
.pn.exp { padding-left: 3px; }
.plus { font: normal 14px/13px "Liberation Sans", sans-serif; width: 15px; height: 15px; border: 1px solid #bbb; text-align: center; margin-right: 7px; flex: none; }

/* right */
.rtools { height: 34px; flex: none; background: #fff; display: flex; align-items: center; gap: 9px; padding-left: 7px; border-top: 1px solid #ddd; border-right: 2px solid #bbb; }
.rtools .vsep { margin: 0 -1px; height: 28px; }
.rtools .vsep.a { margin: 0 -1px 0 -6px; }
.rtools .ti { color: #222; }
.rtools .dis { color: #888; }
.rtools .x { width: 15px; height: 15px; margin-right: 3px; }
.rtools .caret { margin-left: 1px; }
.fx { font: italic 700 13px "Liberation Serif", serif; color: #aaa; width: 14px; margin: 0 -1px; }
.qtable { height: 498px; flex: none; background: #fff; border-top: 3px solid #bbb; border-right: 2px solid #bbb; border-bottom: 1px solid #aaa; }
.qhead { display: flex; height: 26px; width: 1163px; box-shadow: 0 2px 0 #ddd; }
.qhead span { background: linear-gradient(#fff, #e9e9e9); border-right: 1px solid #c8c8c8; border-bottom: 1px solid #ccc; text-align: center; line-height: 25px; color: #222; }
.q0 { width: 31px; } .q1 { width: 126px; } .q2 { width: 45px; } .q3 { width: 251px; } .q4 { width: 49px; } .q5 { width: 188px; } .q6 { width: 184px; } .q7 { width: 101px; } .q8 { width: 101px; } .q9 { width: 85px; }
.dtabs { height: 27px; flex: none; margin-top: 4px; display: flex; align-items: flex-end; padding-left: 2px; border-bottom: 2px solid #999; background: #f0f0f0; }
.dtab { padding: 0 4px 0 5px; height: 25px; line-height: 22px; font-size: 15px; }
.dtab.on { border: 1px solid #aaa; border-bottom: 0; background: #f6f6f6; width: 59px; line-height: 26px; padding: 0 0 0 3px; }
.canvas { height: 276px; flex: none; margin-left: 4px; background: #000; border: 1px solid #bbb; border-width: 0 0 2px 0; }
.draw { display: block; width: 100%; height: 100%; }
.dim { font: 18px "Liberation Sans", sans-serif; fill: #e0e0e0; }
.btabs { height: 29px; flex: none; display: flex; padding: 3px 0 0 12px; border-top: 3px solid #999; background: #f0f0f0; }
.btab { padding: 0 6px 0 5px; height: 21px; line-height: 20px; position: relative; font-size: 15px; border-bottom: 1px solid #666; }
.btab::before, .btab::after { content: ""; position: absolute; top: 0; bottom: 0; width: 1px; background: #666; }
.btab::before { left: 0; transform: skewX(15deg); }
.btab::after { right: 0; transform: skewX(-15deg); }
.btab.on { background: #fff; }

/* status */
.status { height: 27px; flex: none; display: flex; align-items: center; background: #f0f0f0; border-top: 1px solid #e0e0e0; font-size: 14px; white-space: nowrap; }
.status span { height: 24px; line-height: 24px; border-left: 1px solid #ddd; padding-left: 1px; }
.s0 { width: 187px; border-left: 0 !important; } .s1 { width: 99px; } .s2 { width: 163px; } .s3 { width: 63px; } .s4 { width: 312px; } .s5 { width: 821px; } .s6 { width: 87px; } .s7 { flex: 1; }

/* taskbar */
.taskbar { height: 50px; flex: none; background: #1d1d1b; display: flex; justify-content: space-between; color: #fff; }
.slots { display: flex; gap: 11px; padding-left: 5px; }
.slot { width: 51px; height: 50px; display: flex; align-items: center; justify-content: center; }
.slot.run { box-shadow: inset 0 -3px 0 #aaa; }
.tw { width: 20px; height: 20px; }
.tv { margin-left: -5px; }
.app { width: 30px; height: 30px; }
.app1 { width: 26px; height: 32px; }
.y17 { font: 700 10.5px "Liberation Sans", sans-serif; fill: #fff; text-anchor: middle; }
.cad { width: 30px; height: 30px; border-radius: 3px; background: #1a5ab0; border: 2px solid #888; color: #dfe8f8; font: 10px/26px "Liberation Sans", sans-serif; text-align: center; }
.tray { display: flex; align-items: center; width: 340px; position: relative; padding-left: 9px; }
.tray svg { flex: none; }
.tp { width: 20px; height: 22px; }
.tc { width: 16px; height: 10px; margin-left: 26px; }
.tb { width: 20px; height: 16px; margin-left: 12px; }
.tf { width: 16px; height: 18px; margin-left: 13px; }
.ts { width: 20px; height: 18px; margin-left: 10px; }
.tz { font-size: 16px; font-weight: 700; margin-left: 12px; }
.tq { width: 20px; height: 24px; margin-left: 18px; }
.clock { display: flex; flex-direction: column; align-items: center; margin-left: 19px; font-size: 14.500px; line-height: 24px; font-family: "Noto Sans", sans-serif; color: #eee; }
```
